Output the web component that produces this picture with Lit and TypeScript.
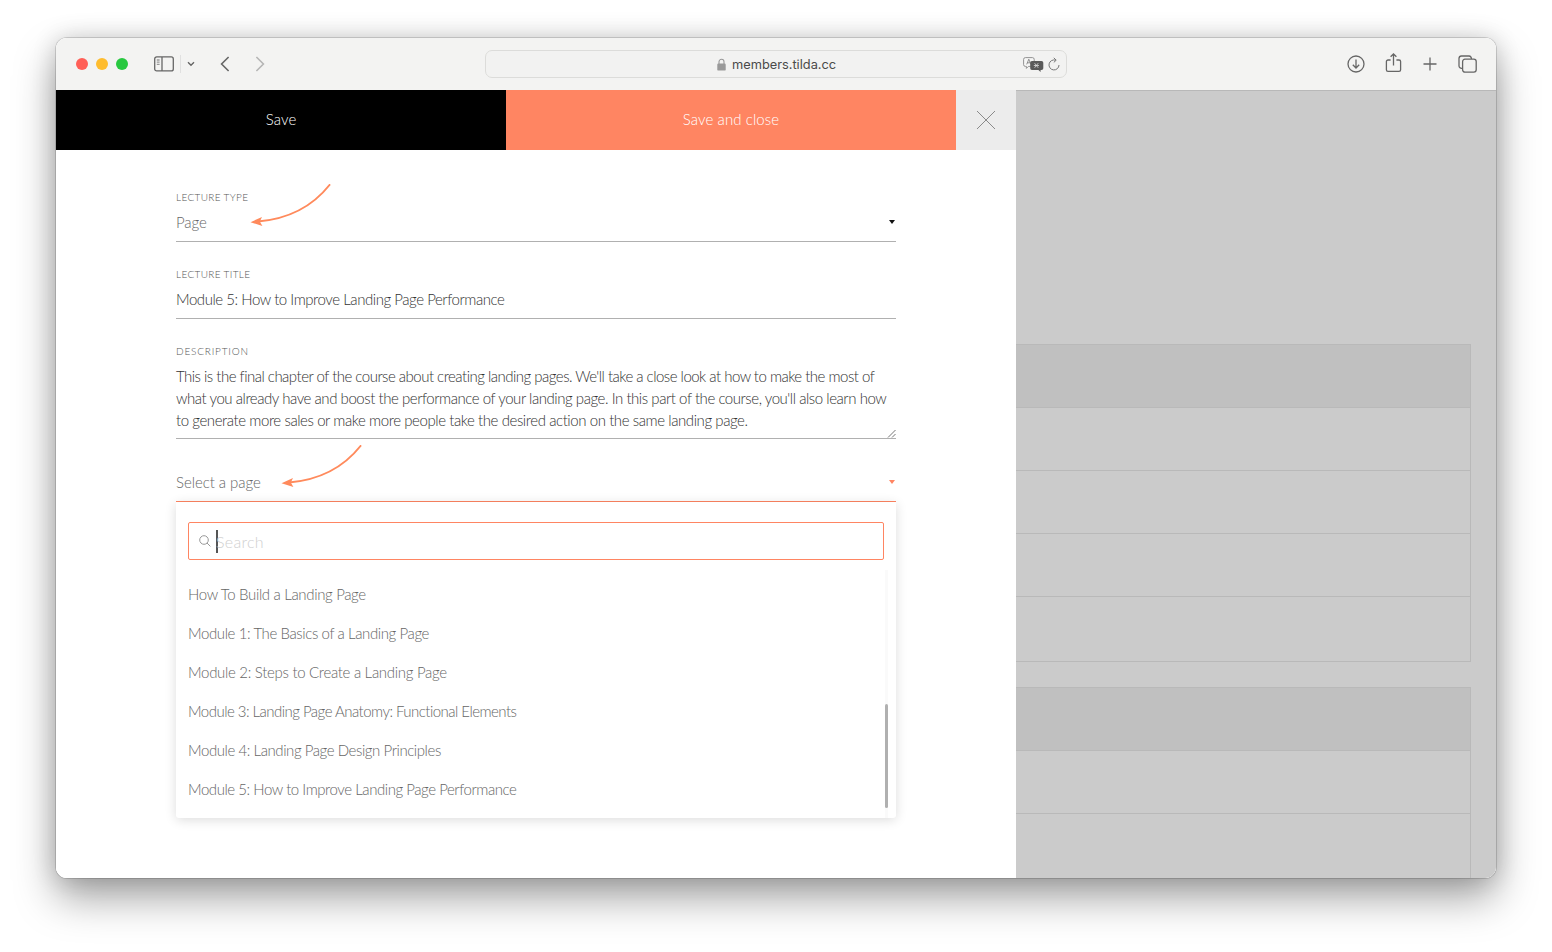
import { LitElement, html, css, svg } from "lit";
import { customElement } from "lit/decorators.js";

// tracking per row: Lato runs wider than the original face, and not evenly
const PAGES = [
  { title: "How To Build a Landing Page", tracking: -0.34 },
  { title: "Module 1: The Basics of a Landing Page", tracking: -0.4 },
  { title: "Module 2: Steps to Create a Landing Page", tracking: -0.3 },
  { title: "Module 3: Landing Page Anatomy: Functional Elements", tracking: -0.53 },
  { title: "Module 4: Landing Page Design Principles", tracking: -0.43 },
  { title: "Module 5: How to Improve Landing Page Performance", tracking: -0.45 },
];

const arrow = (cls: string) => html`
  <svg class="arrow ${cls}" width="84" height="42" viewBox="0 0 84 42" fill="none">
    ${svg`<path d="M79.5 1C62 23 38 35 8 37.5" stroke="#ff8a5c" stroke-width="2" stroke-linecap="round"/>
    <path d="M0.5 38.2L12 33L9.8 37.6L12.4 42Z" fill="#ff8a5c"/>`}
  </svg>
`;

@customElement("app-root")
export class AppRoot extends LitElement {
  static styles = css`
    :host {
      display: block;
      width: 1552px;
      height: 952px;
      background: #fff;
      padding: 38px 56px 74px;
      box-sizing: border-box;
      font-family: "Lato", "Liberation Sans", sans-serif;
      font-weight: 300;
      overflow: hidden;
    }

    .window {
      width: 1440px;
      height: 840px;
      border-radius: 11px;
      overflow: hidden;
      display: flex;
      flex-direction: column;
      background: #fff;
    }

    .frame {
      border-radius: 11px;
      box-shadow: 0 0 0 1px rgba(0, 0, 0, 0.14), 0 20px 42px rgba(0, 0, 0, 0.36), 0 0 24px rgba(0, 0, 0, 0.16);
    }

    .toolbar {
      flex: none;
      height: 52px;
      display: flex;
      align-items: center;
      padding-left: 20px;
      background: #f3f3f2;
      color: #666;
    }
    .toolbar svg {
      display: block;
      flex: none;
    }

    .dots {
      display: flex;
      gap: 8px;
    }
    .dot {
      width: 12px;
      height: 12px;
      border-radius: 50%;
    }
    .red { background: #ff5f57; }
    .yellow { background: #febc2e; }
    .green { background: #28c840; }

    .sep {
      width: 1px;
      height: 18px;
      background: #e0e0e0;
      margin: 0 6px;
    }

    .url {
      flex: none;
      box-sizing: border-box;
      width: 582px;
      height: 28px;
      margin-left: 220px;
      border: 1px solid #dcdcda;
      border-radius: 7px;
      display: flex;
      align-items: center;
      padding-left: 231px;
      background: #f2f2f1;
      font-family: "Inter", "Liberation Sans", sans-serif;
      font-weight: 400;
      font-size: 12.8px;
      color: #4a4a4a;
    }
    .url .host {
      margin-left: 6px;
      width: 104px;
      white-space: nowrap;
    }

    .body {
      flex: 1;
      display: flex;
      min-height: 0;
    }

    .panel {
      flex: none;
      width: 960px;
      background: #fff;
      display: flex;
      flex-direction: column;
    }

    .actions {
      flex: none;
      display: flex;
      height: 60px;
      font-size: 15px;
      font-weight: 300;
      color: #fff;
    }
    .btn {
      width: 450px;
      padding-bottom: 2px;
      box-sizing: border-box;
      display: flex;
      align-items: center;
      justify-content: center;
      letter-spacing: 0.1px;
    }
    .btn.dark { background: #000; }
    .btn.coral { background: #ff8562; }
    .btn.close {
      width: 60px;
      padding-bottom: 0;
      background: #ececec;
    }

    .form {
      position: relative;
      padding: 40px 120px 0;
      display: flex;
      flex-direction: column;
      gap: 25px;
    }

    .field {
      border-bottom: 1px solid #b0b0b0;
    }
    .field.active {
      border-bottom-color: #ff8562;
    }
    .label {
      height: 14px;
      line-height: 14px;
      font-size: 10px;
      font-weight: 300;
      letter-spacing: 0.35px;
      color: #555;
      text-transform: uppercase;
    }
    .label.wide {
      letter-spacing: 0.82px;
    }
    .value {
      display: flex;
      align-items: center;
      justify-content: space-between;
      padding: 7px 0 8px;
      line-height: 22px;
      font-size: 15px;
      letter-spacing: -0.45px;
      color: #333;
      white-space: nowrap;
    }
    .value.muted {
      letter-spacing: -0.05px;
      color: #666;
    }
    .desc {
      position: relative;
      padding: 7px 0;
      line-height: 22px;
      font-size: 15px;
      color: #333;
      white-space: nowrap;
    }
    .l1 { letter-spacing: -0.51px; }
    .l2 { letter-spacing: -0.45px; }
    .l3 { letter-spacing: -0.42px; }
    .grip {
      position: absolute;
      right: 0;
      bottom: 0;
    }
    .caret {
      width: 0;
      height: 0;
      margin-right: 1px;
      border-left: 3px solid transparent;
      border-right: 3px solid transparent;
      border-top: 4px solid #111;
    }
    .active .caret {
      border-top-color: #ff8562;
    }

    .select-group {
      display: flex;
      flex-direction: column;
    }

    .dropdown {
      position: relative;
      height: 316px;
      box-sizing: border-box;
      padding: 20px 12px 0;
      background: #fff;
      border-radius: 0 0 3px 3px;
      box-shadow: 0 2px 12px rgba(0, 0, 0, 0.14);
    }
    .search {
      box-sizing: border-box;
      height: 38px;
      border: 1px solid #ff8562;
      border-radius: 2px;
      display: flex;
      align-items: center;
      padding-left: 10px;
      font-size: 16px;
      letter-spacing: 0.3px;
      color: #cfcfcf;
    }
    .cursor {
      width: 1.5px;
      height: 23px;
      margin: 0 -1.5px 0 5px;
      background: #555;
    }
    .list {
      margin-top: 15px;
    }
    .item {
      height: 39px;
      line-height: 38px;
      font-size: 15px;
      color: #666;
      white-space: nowrap;
    }
    .track {
      position: absolute;
      right: 8px;
      top: 68px;
      bottom: 0;
      width: 3px;
      background: #fafafa;
    }
    .thumb {
      position: absolute;
      top: 134px;
      left: 0;
      width: 3px;
      height: 104px;
      border-radius: 2px;
      background: #b0b0b0;
    }

    .arrow {
      position: absolute;
    }
    .arrow.one { left: 194px; top: 34px; }
    .arrow.two { left: 225px; top: 295px; }

    .backdrop {
      flex: 1;
      background: #cbcbcb;
      border-top: 1px solid #b8b8b8;
      padding-top: 253px;
      display: flex;
      flex-direction: column;
      gap: 25px;
      overflow: hidden;
    }
    .table {
      flex: none;
      width: 455px;
      box-sizing: border-box;
      border: 1px solid #b9b9b9;
      border-left: 0;
    }
    .cell {
      height: 62px;
      border-bottom: 1px solid #b9b9b9;
    }
    .cell:last-child {
      border-bottom: 0;
      height: 64px;
    }
    .cell.head {
      background: #c0c0c0;
    }
  `;

  render() {
    return html`
      <div class="frame">
        <div class="window">
          <div class="toolbar">
            <div class="dots">
              <div class="dot red"></div>
              <div class="dot yellow"></div>
              <div class="dot green"></div>
            </div>
            <svg style="margin-left:26px" width="20" height="16" viewBox="0 0 20 16" fill="none" stroke="#666" stroke-width="1.3">
              <rect x="0.7" y="0.9" width="18.6" height="14" rx="2"/>
              <path d="M8 1v14"/>
              <path d="M2.8 4h2.8M2.8 6.2h2.8M2.8 8.4h2.8" stroke="#999"/>
            </svg>
            <div class="sep"></div>
            <svg width="8" height="6" viewBox="0 0 8 6" fill="none" stroke="#666" stroke-width="1.4">
              <path d="M1 1.3l3 3 3-3"/>
            </svg>
            <svg style="margin-left:25px" width="10" height="16" viewBox="0 0 10 16" fill="none" stroke="#666" stroke-width="1.6">
              <path d="M8.6 1L1.6 8l7 7"/>
            </svg>
            <svg style="margin-left:25px" width="10" height="16" viewBox="0 0 10 16" fill="none" stroke="#b5b5b5" stroke-width="1.6">
              <path d="M1.4 1l7 7-7 7"/>
            </svg>
            <div class="url">
              <svg width="9" height="13" viewBox="0 0 9 13">
                <path d="M2 6V3.8a2.5 2.5 0 0 1 5 0V6" fill="none" stroke="#999" stroke-width="1.1"/>
                <rect x="0.3" y="5.6" width="8.4" height="7" rx="1.2" fill="#999"/>
              </svg>
              <span class="host">members.tilda.cc</span>
              <svg style="margin-left:187px" width="21" height="15" viewBox="0 0 21 15">
                <path d="M2.4 .6h7A1.8 1.8 0 0 1 11.2 2.4v5.2A1.8 1.8 0 0 1 9.4 9.4H5.4L3.4 11.4V9.4H2.4A1.8 1.8 0 0 1 .6 7.6V2.4A1.8 1.8 0 0 1 2.4 .6z" fill="#f6f6f5" stroke="#888" stroke-width=".9"/>
                <path d="M3.7 7.4l2.1-5.2 2.1 5.2M4.4 5.8h2.8" fill="none" stroke="#777" stroke-width=".8"/>
                <path d="M9 4h9.5A1.8 1.8 0 0 1 20.3 5.8v5.4a1.8 1.8 0 0 1-1.8 1.8H17.6v2L15.4 13H9a1.8 1.8 0 0 1-1.8-1.8V5.8A1.8 1.8 0 0 1 9 4z" fill="#5a5a5a"/>
                <path d="M11.6 6.2l3.6 4.6M15.2 6.2l-3.6 4.6M10.8 8.5h5.2" stroke="#ddd" stroke-width=".8"/>
              </svg>
              <svg style="margin-left:4px" width="12" height="15" viewBox="0 0 12 15" fill="none" stroke="#777" stroke-width="1">
                <path d="M7.6 3.2A5 5 0 1 0 11 8"/>
                <path d="M5.8.8l2.4 2.4-2.4 2.2"/>
              </svg>
            </div>
            <svg style="margin-left:280px" width="18" height="18" viewBox="0 0 18 18" fill="none" stroke="#666" stroke-width="1.3">
              <circle cx="9" cy="9" r="8"/>
              <path d="M9 4.6v8.2M5.8 9.8L9 13l3.2-3.2"/>
            </svg>
            <svg style="margin-left:20px;margin-top:-3px" width="17" height="20" viewBox="0 0 17 20" fill="none" stroke="#666" stroke-width="1.3">
              <path d="M5.6 7H3a1.6 1.6 0 0 0-1.6 1.6v8.2A1.6 1.6 0 0 0 3 18.4h11a1.6 1.6 0 0 0 1.6-1.6V8.6A1.6 1.6 0 0 0 14 7h-2.6"/>
              <path d="M8.5 12.5V1.2M5.6 3.8l2.9-2.8 2.9 2.8"/>
            </svg>
            <svg style="margin-left:20px" width="16" height="16" viewBox="0 0 16 16" fill="none" stroke="#666" stroke-width="1.3">
              <path d="M8 1.5v13M1.5 8h13"/>
            </svg>
            <svg style="margin-left:20px" width="19" height="18" viewBox="0 0 19 18" fill="none" stroke="#666" stroke-width="1.3">
              <path d="M4 13.4A2.6 2.6 0 0 1 1 11V3.4A2.6 2.6 0 0 1 3.4 1H11a2.6 2.6 0 0 1 2.4 3"/>
              <rect x="4.6" y="4.2" width="13.6" height="13" rx="2.4"/>
            </svg>
          </div>

          <div class="body">
            <div class="panel">
              <div class="actions">
                <div class="btn dark">Save</div>
                <div class="btn coral">Save and close</div>
                <div class="btn close">
                  <svg width="20" height="20" viewBox="0 0 20 20" stroke="#8a8a8a" stroke-width="1">
                    <path d="M1 1l18 18M19 1L1 19"/>
                  </svg>
                </div>
              </div>

              <div class="form">
                <div class="field">
                  <div class="label">Lecture type</div>
                  <div class="value muted"><span>Page</span><span class="caret" style="border-top-color:#111"></span></div>
                </div>
                <div class="field">
                  <div class="label">Lecture title</div>
                  <div class="value">Module 5: How to Improve Landing Page Performance</div>
                </div>
                <div class="field">
                  <div class="label wide">Description</div>
                  <div class="desc">
                    <span class="l1">This is the final chapter of the course about creating landing pages. We'll take a close look at how to make the most of</span><br />
                    <span class="l2">what you already have and boost the performance of your landing page. In this part of the course, you'll also learn how</span><br />
                    <span class="l3">to generate more sales or make more people take the desired action on the same landing page.</span>
                    <svg class="grip" width="9" height="9" viewBox="0 0 9 9" stroke="#777" stroke-width="1">
                      <path d="M1 8.5L8.5 1M5 8.5L8.5 5"/>
                    </svg>
                  </div>
                </div>
                <div class="select-group">
                  <div class="field active">
                    <div class="value muted"><span>Select a page</span><span class="caret"></span></div>
                  </div>
                  <div class="dropdown">
                    <div class="search">
                      <svg width="12" height="12" viewBox="0 0 12 12" fill="none" stroke="#999" stroke-width="1">
                        <circle cx="5" cy="5" r="4.3"/>
                        <path d="M8 8l3.4 3.4"/>
                      </svg>
                      <span class="cursor"></span>
                      <span>Search</span>
                    </div>
                    <div class="list">
                      ${PAGES.map((p) => html`<div class="item" style="letter-spacing:${p.tracking}px">${p.title}</div>`)}
                    </div>
                    <div class="track"><div class="thumb"></div></div>
                  </div>
                </div>
                ${arrow("one")} ${arrow("two")}
              </div>
            </div>

            <div class="backdrop">
              <div class="table">
                <div class="cell head"></div>
                <div class="cell"></div>
                <div class="cell"></div>
                <div class="cell"></div>
                <div class="cell"></div>
              </div>
              <div class="table">
                <div class="cell head"></div>
                <div class="cell"></div>
                <div class="cell"></div>
              </div>
            </div>
          </div>
        </div>
      </div>
    `;
  }
}
